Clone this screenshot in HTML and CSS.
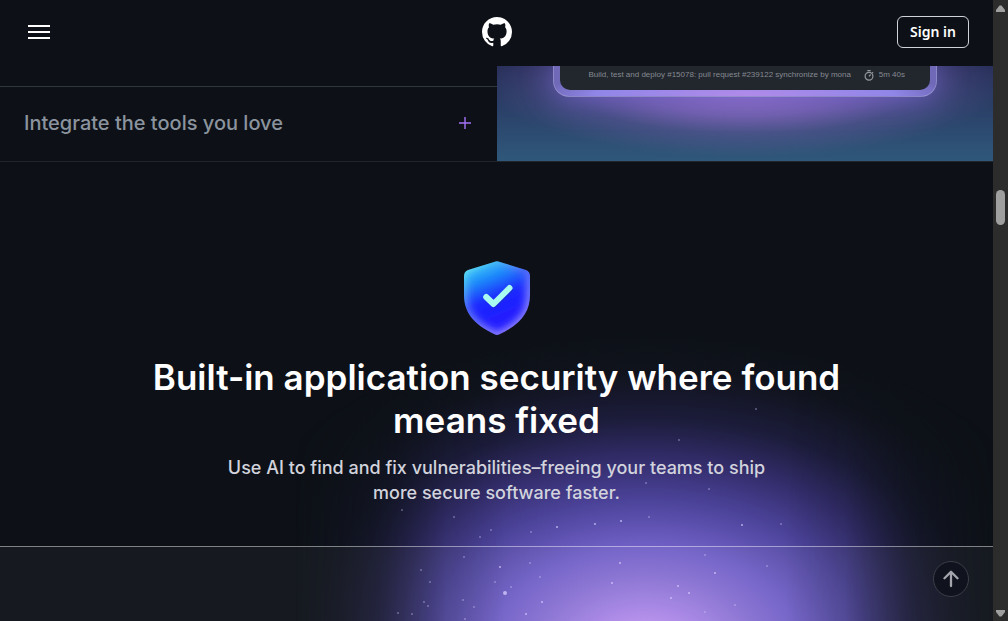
FILE: index.html
```html
<!DOCTYPE html>
<html lang="en">
<head>
<meta charset="utf-8">
<meta name="viewport" content="width=device-width, initial-scale=1">
<title>GitHub</title>
<link rel="stylesheet" href="styles.css">
</head>
<body>
<div class="viewport">
  <div class="page">
    <header class="header">
      <button class="menu-button" aria-label="Menu"><span></span><span></span><span></span></button>
      <a class="logo" href="#" aria-label="GitHub">
        <svg width="30" height="30" viewBox="0 0 16 16" fill="#fff"><path d="M8 0c4.42 0 8 3.58 8 8a8.013 8.013 0 0 1-5.45 7.59c-.4.08-.55-.17-.55-.38 0-.27.01-1.13.01-2.2 0-.75-.25-1.23-.54-1.48 1.78-.2 3.65-.88 3.65-3.95 0-.88-.31-1.59-.82-2.15.08-.2.36-1.02-.08-2.12 0 0-.67-.22-2.2.82-.64-.18-1.32-.27-2-.27-.68 0-1.36.09-2 .27-1.53-1.03-2.2-.82-2.2-.82-.44 1.1-.16 1.92-.08 2.12-.51.56-.82 1.28-.82 2.15 0 3.06 1.86 3.75 3.64 3.95-.23.2-.44.55-.51 1.07-.46.21-1.61.55-2.33-.66-.15-.24-.6-.83-1.23-.82-.67.01-.27.38.01.53.34.19.73.9.82 1.13.16.45.68 1.31 2.69.94 0 .67.01 1.3.01 1.49 0 .21-.15.45-.55.38A7.995 7.995 0 0 1 0 8c0-4.42 3.58-8 8-8Z"/></svg>
      </a>
      <a class="sign-in" href="#">Sign in</a>
    </header>
    <section class="features">
      <div class="accordion">
        <button class="accordion-item">
          <span>Integrate the tools you love</span>
          <svg width="12" height="12" viewBox="0 0 12 12" stroke="#a371f7" stroke-width="1.4"><path d="M6 0v12M0 6h12"/></svg>
        </button>
      </div>
      <div class="preview">
        <div class="run-frame">
          <div class="run-card">
            <span>Build, test and deploy #15078: pull request #239122 synchronize by mona</span>
            <span class="duration">
              <svg width="10" height="11" viewBox="0 0 10 11" fill="none" stroke="#92979e" stroke-width="1.2"><circle cx="5" cy="6.2" r="3.900"/><path d="M3.3.6h3.4M5 6.400l1.600-1.900M8.200 2.200l1 .9"/></svg>
              5m 40s
            </span>
          </div>
        </div>
      </div>
    </section>
    <main class="security">
      <svg class="stars" width="993" height="221" viewBox="0 400 993 221" fill="#d9ccff" aria-hidden="true">
        <g opacity=".75"><circle cx="505" cy="593" r="2"/><circle cx="526" cy="614" r="1"/><circle cx="557" cy="527" r="1"/><circle cx="595" cy="524" r="1"/><circle cx="621" cy="521" r="1"/><circle cx="742" cy="525" r="1"/><circle cx="715" cy="573" r="1"/><circle cx="689" cy="593" r="1"/><circle cx="671" cy="598" r="1"/><circle cx="678" cy="586" r="1"/><circle cx="612" cy="583" r="1"/><circle cx="620" cy="563" r="1"/><circle cx="542" cy="602" r="1"/><circle cx="500" cy="567" r="1"/></g>
        <g opacity=".4"><circle cx="454" cy="517" r="1"/><circle cx="402" cy="510" r="1"/><circle cx="480" cy="537" r="1"/><circle cx="491" cy="530" r="1"/><circle cx="464" cy="557" r="1"/><circle cx="421" cy="570" r="1"/><circle cx="430" cy="582" r="1"/><circle cx="424" cy="602" r="1"/><circle cx="428" cy="606" r="1"/><circle cx="412" cy="614" r="1"/><circle cx="398" cy="613" r="1"/><circle cx="465" cy="619" r="1"/><circle cx="474" cy="607" r="1"/><circle cx="495" cy="582" r="1"/><circle cx="540" cy="577" r="1"/><circle cx="530" cy="563" r="1"/><circle cx="531" cy="532" r="1"/><circle cx="646" cy="483" r="1"/><circle cx="709" cy="489" r="1"/><circle cx="679" cy="440" r="1"/><circle cx="756" cy="409" r="1"/><circle cx="781" cy="524" r="1"/><circle cx="767" cy="566" r="1"/><circle cx="705" cy="555" r="1"/><circle cx="735" cy="605" r="1"/><circle cx="705" cy="612" r="1"/><circle cx="649" cy="517" r="1"/><circle cx="511" cy="587" r="1"/><circle cx="463" cy="600" r="1"/></g>
      </svg>
      <div class="intro">
        <svg class="shield" width="68" height="76" viewBox="0 0 68 76">
          <defs>
            <linearGradient id="rim" x1="0" y1="0" x2=".6" y2="1"><stop offset="0" stop-color="#7ffcf3"/><stop offset=".22" stop-color="#48bff5"/><stop offset=".5" stop-color="#5068f8"/><stop offset="1" stop-color="#8b7cff"/></linearGradient>
            <linearGradient id="face" x1=".1" y1="0" x2=".45" y2="1"><stop offset="0" stop-color="#35d0fa"/><stop offset=".28" stop-color="#1a80fa"/><stop offset=".55" stop-color="#1b28ff"/><stop offset="1" stop-color="#2419ff"/></linearGradient>
            <filter id="soft" x="-20%" y="-20%" width="140%" height="140%"><feGaussianBlur stdDeviation="3.500"/></filter>
            <clipPath id="edge"><path d="M31 2Q34 .5 37 2L63 10Q67 11.500 67 16V35C67 52 58 64 36.500 74.300Q34 75.500 31.500 74.300C10 64 1 52 1 35V16Q1 11.500 5 10Z"/></clipPath>
          </defs>
          <g clip-path="url(#edge)"><rect width="68" height="76" fill="url(#rim)"/><path d="M34 5L62 14V37C62 53 53 62 34 71C15 62 6 53 6 37V14Z" fill="url(#face)" filter="url(#soft)"/></g>
          <path d="M24 38L31.500 45 47 30" fill="none" stroke="#1530b8" stroke-width="5.500" stroke-linecap="round" stroke-linejoin="round" opacity=".5"/>
          <path d="M23.200 37L30.500 44 46.500 28" fill="none" stroke="#a9fbef" stroke-width="6" stroke-linecap="round" stroke-linejoin="round"/>
        </svg>
        <h2>Built-in application security where found means fixed</h2>
        <p>Use AI to find and fix vulnerabilities–freeing your teams to ship more secure software faster.</p>
      </div>
      <div class="showcase"></div>
    </main>
    <button class="to-top" aria-label="Back to top">
      <svg width="16" height="18" viewBox="0 0 16 18" fill="none" stroke="#a4a5ad" stroke-width="2.300" stroke-linecap="round" stroke-linejoin="round"><path d="M8 16V2M1.500 8.300L8 1.800l6.500 6.500"/></svg>
    </button>
  </div>
  <div class="scrollbar" aria-hidden="true">
    <svg width="9" height="7" viewBox="0 0 9 7" fill="#9f9f9f"><path d="M3.500.5h2L9 5v2H0V5z"/></svg>
    <span class="thumb"></span>
    <svg class="down" width="9" height="7" viewBox="0 0 9 7" fill="#9f9f9f"><path d="M3.500 6.500h2L9 2V0H0v2z"/></svg>
  </div>
</div>
</body>
</html>
```
FILE: styles.css
```css
* { box-sizing: border-box; }
body {
  margin: 0;
  background: #0d1117;
  color: #fff;
  font-family: Inter, "Liberation Sans", sans-serif;
}
button { font: inherit; color: inherit; background: none; border: 0; cursor: pointer; }
a { color: inherit; text-decoration: none; }
svg { display: block; }
.viewport { display: grid; grid-template-columns: minmax(0, 1fr) 15px; min-height: 100vh; }
.page { position: relative; display: flex; flex-direction: column; }

.header {
  display: grid;
  grid-template-columns: 1fr auto 1fr;
  align-items: center;
  padding: 16px 24px 18px;
}
.menu-button { display: flex; flex-direction: column; gap: 4px; width: 22px; margin-left: 4px; padding: 0; }
.menu-button span { height: 2px; background: #fff; }
.sign-in {
  justify-self: end;
  padding: 6px 12px;
  border: 1px solid #d0d4da;
  border-radius: 6px;
  font: 600 14px/18px "Noto Sans", sans-serif;
}

.features { display: grid; grid-template-columns: 1fr 1fr; border-bottom: 1px solid #21262d; }
.accordion { padding-top: 20px; }
.accordion-item {
  display: flex;
  justify-content: space-between;
  align-items: center;
  width: 100%;
  height: 75px;
  padding: 0 26px 2px 24px;
  border-top: 1px solid #30363d;
  color: #8b949e;
  font-size: 20px;
  font-weight: 500;
}
.preview {
  overflow: hidden;
  padding: 0 56px;
  background:
    radial-gradient(260px 75px at 50% 16px, #a87cdc, #8f6cc8b3 45%, #7560ae59 70%, #5f60a000),
    linear-gradient(#262e57, #2b4269 50%, #2f587a);
}
.run-frame {
  padding: 0 6px 6px;
  border: 1px solid #ffffff33;
  border-top: 0;
  border-radius: 0 0 16px 16px;
  background: radial-gradient(ellipse at 50% 100%, #b18be9, #9086e8 55%, #7069b8 75%);
  box-shadow: 0 0 30px #6e60c6;
}
.run-card {
  display: flex;
  justify-content: space-between;
  align-items: center;
  height: 24px;
  padding: 0 25px 6px 29px;
  border-radius: 0 0 10px 10px;
  background: #22262d;
  color: #858a91;
  font: 8px/10px "Liberation Sans", sans-serif;
  white-space: nowrap;
}
.duration { display: flex; align-items: center; gap: 5px; }

.security {
  position: relative;
  flex: 1;
  display: flex;
  flex-direction: column;
}
.security::before {
  content: "";
  position: absolute;
  inset: 0;
  background: radial-gradient(430px 290px at 65% calc(100% + 30px), #c29cf4 0%, #b48eec 10%, #9278d8 22%, #7060c6 36%, #4c439a 52%, #332d6b 66%, #1c1c3b 80%, #10131c 97%, #0d111700 110%);
  mask-image: linear-gradient(90deg, transparent calc(65% - 350px), #0005 calc(65% - 270px), #000d calc(65% - 200px), #000 calc(65% - 140px), #000 calc(65% + 140px), #000d calc(65% + 200px), #0005 calc(65% + 270px), transparent calc(65% + 350px));
}
.stars { position: absolute; left: calc(50% - 497px); bottom: 0; }
.intro {
  position: relative;
  display: flex;
  flex-direction: column;
  align-items: center;
  padding: 98px 24px 41px;
  text-align: center;
}
h2 { max-width: 760px; margin: 20px 0 13px; font-size: 35px; line-height: 43px; font-weight: 600; }
p { max-width: 580px; margin: 0; color: #d2d3dc; font-size: 18px; line-height: 25px; font-weight: 500; }
.showcase { position: relative; flex: 1; min-height: 75px; border-top: 1px solid #ffffff73; background: #ffffff0a; }

.to-top {
  position: fixed;
  right: 39px;
  bottom: 24px;
  display: grid;
  place-items: center;
  width: 36px;
  height: 36px;
  padding: 0;
  border: 1px solid #3d3e49;
  border-radius: 50%;
  background: #10131d;
}
.scrollbar {
  display: flex;
  flex-direction: column;
  align-items: center;
  padding: 5px 0 4px;
  background: #2c2c2c;
}
.thumb { width: 9px; height: 35px; margin-top: 178px; border-radius: 5px; background: #9f9f9f; }
.down { margin-top: auto; }
```
